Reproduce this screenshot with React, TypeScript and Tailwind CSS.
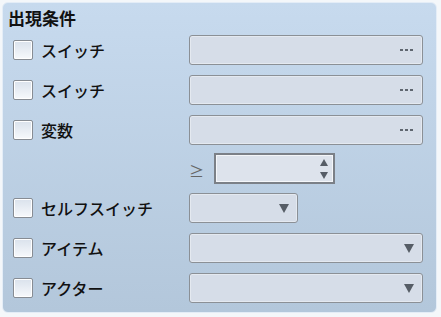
import React from "react";

const Dots = () => (
  <div className="flex gap-[2px] mr-[9px]">
    <span className="w-[3px] h-[2px] bg-[#5f666f]" />
    <span className="w-[3px] h-[2px] bg-[#5f666f]" />
    <span className="w-[3px] h-[2px] bg-[#5f666f]" />
  </div>
);

const Down = () => (
  <svg width="10" height="9" viewBox="0 0 10 9" className="mr-[8px]">
    <polygon points="0,0 10,0 5,9" fill="#565d66" />
  </svg>
);

const Checkbox = () => (
  <div className="w-[20px] h-[20px] shrink-0 rounded-[2px] border border-[#878c93] bg-gradient-to-b from-[#dae2ec] to-[#f7f9fc] shadow-[inset_0_0_0_1px_#ffffff]" />
);

const Field = ({ w, children }: { w: string; children?: React.ReactNode }) => (
  <div
    className={`${w} h-[30px] rounded-[3px] border border-[#8b9096] bg-[#d6dde8] shadow-[inset_0_0_0_1px_#e4e9f0] flex items-center justify-end`}
  >
    {children}
  </div>
);

const Label = ({ text }: { text: string }) => (
  <div className="w-[186px] flex items-center gap-[8px] pl-[10px]">
    <Checkbox />
    <span className="text-[16px] text-[#111] font-medium leading-none">{text}</span>
  </div>
);

export default function App() {
  return (
    <div
      className="w-[441px] h-[317px] bg-[#f4f7fa] pt-[2px] pl-[2px]"
      style={{ fontFamily: '"Noto Sans CJK JP", "Noto Sans", sans-serif' }}
    >
      <div className="w-[435px] h-[311px] rounded-[6px] border border-[#e4edf7] bg-gradient-to-b from-[#c7daee] to-[#b3c7db] flex flex-col">
        <div className="h-[32px] leading-[30px] pl-[5px] text-[17px] font-bold text-[#111]">出現条件</div>
        <div className="flex flex-col gap-[10px]">
          <div className="flex h-[30px] items-center">
            <Label text="スイッチ" />
            <Field w="w-[234px]">
              <Dots />
            </Field>
          </div>
          <div className="flex h-[30px] items-center">
            <Label text="スイッチ" />
            <Field w="w-[234px]">
              <Dots />
            </Field>
          </div>
          <div className="flex h-[30px] items-center">
            <Label text="変数" />
            <Field w="w-[234px]">
              <Dots />
            </Field>
          </div>
        </div>
        <div className="flex h-[31px] mt-[8px] items-center">
          <div className="w-[186px]" />
          <span className="w-[25px] text-[15px] text-[#666] leading-none pt-[4px]">≥</span>
          <div className="w-[121px] h-[31px] border-2 border-[#7b8087] bg-[#dde3ec] shadow-[inset_0_0_0_1px_#f4f6f9] flex flex-col items-end justify-center gap-[6px] pr-[5px]">
            <svg width="8" height="7" viewBox="0 0 8 7">
              <polygon points="4,0 8,7 0,7" fill="#565d66" />
            </svg>
            <svg width="8" height="7" viewBox="0 0 8 7">
              <polygon points="0,0 8,0 4,7" fill="#565d66" />
            </svg>
          </div>
        </div>
        <div className="flex h-[30px] mt-[9px] items-center">
          <Label text="セルフスイッチ" />
          <Field w="w-[109px]">
            <Down />
          </Field>
        </div>
        <div className="flex h-[30px] mt-[10px] items-center">
          <Label text="アイテム" />
          <Field w="w-[234px]">
            <Down />
          </Field>
        </div>
        <div className="flex h-[30px] mt-[10px] items-center">
          <Label text="アクター" />
          <Field w="w-[234px]">
            <Down />
          </Field>
        </div>
      </div>
    </div>
  );
}
